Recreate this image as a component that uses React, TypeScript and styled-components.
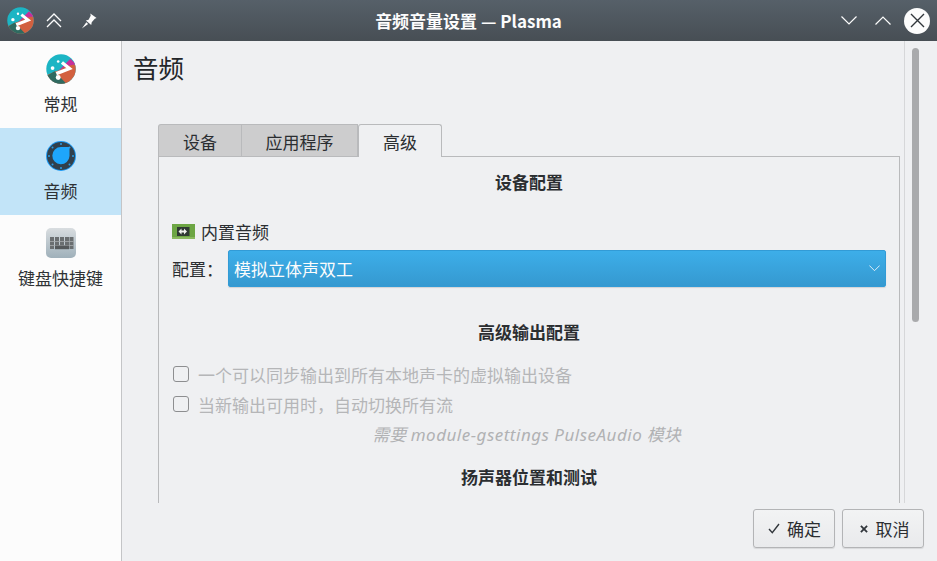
import React from "react";
import styled, { createGlobalStyle } from "styled-components";

const Global = createGlobalStyle`
  html, body { margin: 0; padding: 0; height: 100%; overflow: hidden; }
  body { font-family: "Noto Sans", "Noto Sans CJK SC", sans-serif; font-size: 17px; color: #2b2e31; background: #eff0f2; }
  * { box-sizing: border-box; }
`;

const Window = styled.div`
  width: 937px; height: 561px; display: flex; flex-direction: column; overflow: hidden;
`;
const TitleBar = styled.header`
  height: 41px; flex: none; display: grid; grid-template-columns: 1fr auto 1fr; align-items: center;
  background: linear-gradient(#566069, #474e54);
  color: #fcfcfc;
`;
const TitleLeft = styled.div`
  display: flex; align-items: center; padding-left: 7px; gap: 12px;
  svg:last-child { margin-left: 7px; }
`;
const TitleRight = styled.div`
  display: flex; align-items: center; justify-content: flex-end; padding-right: 7px; gap: 13px;
`;
const ChevronPair = styled.div`display: flex; align-items: center; gap: 18px;`;
const TitleText = styled.div`
  font-size: 17px; font-weight: 700; line-height: 20px; font-family: "Noto Sans CJK SC", "Noto Sans", sans-serif;
`;
const Body = styled.div`flex: 1; display: flex; min-height: 0;`;
const Sidebar = styled.nav`
  width: 122px; flex: none; background: #fcfcfc; border-right: 1px solid #c4c5c7;
  display: flex; flex-direction: column;
`;
const NavItem = styled.div<{ $active?: boolean }>`
  height: 87px; display: flex; flex-direction: column; align-items: center; padding-top: 13px;
  background: ${p => (p.$active ? "#c2e4f8" : "transparent")};
`;
const NavLabel = styled.span`
  margin-top: 9px; line-height: 24px; white-space: nowrap; font-size: 17px; color: #2f3235;
`;
const Main = styled.main`flex: 1; display: flex; flex-direction: column; min-width: 0;`;
const ScrollArea = styled.div`height: 462px; flex: none; display: flex; overflow: hidden;`;
const Content = styled.div`width: 782px; flex: none; padding: 9px 0 0 11px; overflow: hidden;`;
const Heading = styled.h1`
  margin: 0; font-size: 25.5px; font-weight: 400; line-height: 36px; color: #232629;
`;
const Tabs = styled.div`display: flex; margin: 38px 0 0 25px; height: 32px; position: relative; z-index: 1;`;
const Tab = styled.div<{ $active?: boolean; $w: number }>`
  width: ${p => p.$w}px; height: ${p => (p.$active ? "33px" : "32px")};
  display: flex; align-items: center; justify-content: center; padding-top: 1px;
  background: ${p => (p.$active ? "#eff0f2" : "#cdcdce")};
  border: 1px solid #b9babc;
  border-width: ${p => (p.$active ? "1px 1px 0 1px" : "1px 1px 0 0")};
  border-radius: ${p => (p.$active ? "3px 3px 0 0" : "0")};
  font-size: 17px;
  &:first-child { border-left-width: 1px; border-radius: 3px 0 0 0; }
`;
const Panel = styled.section`
  margin-left: 25px; width: 742px; height: 500px; border: 1px solid #b9babc; border-bottom: 0;
  padding: 13px 13px 0 13px;
`;
const SectionTitle = styled.div<{ $mt?: number }>`
  text-align: center; font-weight: 700; font-size: 17px; line-height: 24px; margin-top: ${p => p.$mt ?? 0}px; color: #2b2e31;
  font-family: "Noto Sans CJK SC", sans-serif;
`;
const DeviceRow = styled.div`display: flex; align-items: center; gap: 6px; margin-top: 25px; height: 24px; font-size: 17px;`;
const ProfileRow = styled.div`display: flex; align-items: center; margin-top: 7px; gap: 5px; font-size: 17px;`;
const Select = styled.div`
  flex: 1; height: 37px; display: flex; align-items: center; justify-content: space-between;
  padding: 0 5px 0 5px; border-radius: 2px; color: #fcfcfc; font-size: 17px;
  background: linear-gradient(#3daee9, #3599d0);
  border: 1px solid #329bd6; box-shadow: 0 1px 1px rgba(0,0,0,.12);
`;
const CheckRow = styled.label`
  display: flex; align-items: center; gap: 9px; height: 30px; color: #b5b6b8; font-size: 17px;
`;
const CheckList = styled.div`margin-top: 15px;`;
const Box = styled.span`
  width: 16px; height: 16px; border: 1px solid #8d8e90; border-radius: 3px; background: #eff0f2; flex: none; margin-left: 1px;
`;
const Hint = styled.div`
  text-align: center; font-style: italic; color: #b1b2b4; font-size: 17px; line-height: 30px; padding: 1px 5px 0 0;
`;
const HintLatin = styled.span`letter-spacing: .5px;`;
const ScrollColumn = styled.div`flex: 1; border-left: 1px solid #d6d7d9; padding: 7px 0 0 7px;`;
const Thumb = styled.div`width: 7px; height: 274px; background: #a9aaac; border-radius: 3.5px;`;
const Footer = styled.footer`flex: 1; display: flex; justify-content: flex-end; gap: 7px; padding: 6px 13px 0 0;`;
const Button = styled.button<{ $pad: number; $gap: number }>`
  width: 82px; height: 39px; display: flex; align-items: center; justify-content: center; gap: ${p => p.$gap}px;
  font: inherit; font-size: 17px; color: #2b2e31; padding: 0 0 0 ${p => p.$pad}px; border: 1px solid #b3b4b6; border-radius: 3px;
  background: linear-gradient(#f2f3f4, #e9eaec); box-shadow: 0 1px 1px rgba(0,0,0,.1);
`;
const CloseBall = styled.span`
  width: 26px; height: 26px; border-radius: 50%; background: #fcfcfc; display: flex; align-items: center; justify-content: center;
`;

const Logo = ({ size }: { size: number }) => (
  <svg width={size} height={size} viewBox="0 0 32 32">
    <defs><clipPath id={`lc${size}`}><circle cx="16" cy="16" r="15.7" /></clipPath></defs>
    <g clipPath={`url(#lc${size})`}>
      <rect width="32" height="32" fill="#1cb5c4" />
      <path d="M0 23L9 19L15 17L25 9L32 12V32H0Z" fill="#d2603f" />
      <path d="M0 24L9 18.5L22 32H0Z" fill="#2f6a60" />
      <path d="M13 18L26 5L32 11L21 13Z" fill="#c6309a" />
      <path d="M17 9L25 15.500L11 21" fill="none" stroke="#fff" strokeWidth="3.600" />
      <circle cx="7" cy="15" r="2" fill="#fff" />
      <circle cx="13" cy="8" r="1.4" fill="#fff" />
      <circle cx="13" cy="25" r="2.6" fill="#fff" />
    </g>
  </svg>
);

const AudioIcon = () => (
  <svg width="30" height="30" viewBox="0 0 30 30">
    <circle cx="15" cy="15" r="15" fill="#1d99f3" />
    <circle cx="15" cy="15" r="14" fill="#31404c" />
    <path d="M15 6h8.500v9a8.600 8.600 0 1 1-8.500-9z" fill="#1ea6fb" />
    {[[15,3],[23.500,6.500],[27,15],[23.500,23.500],[15,27],[6.500,23.500],[3,15],[6.500,6.500]].map(([x,y]) => (
      <circle key={`${x}-${y}`} cx={x} cy={y} r="1" fill="#2a9ee8" />
    ))}
  </svg>
);

const KeyboardIcon = () => (
  <svg width="30" height="30" viewBox="0 0 30 30">
    <defs><linearGradient id="kb" x1="0" y1="0" x2="0" y2="1"><stop offset="0" stopColor="#d9dde0" /><stop offset="1" stopColor="#9fb0ba" /></linearGradient></defs>
    <rect width="30" height="30" rx="5" fill="url(#kb)" />
    {[4,9,14,19,23.500].map(x => <rect key={x} x={x} y="9" width="4" height="12" fill="#6a6e70" />)}
    <rect x="4" y="13" width="23.500" height=".8" fill="#a8acae" />
    <rect x="4" y="17" width="23.500" height=".8" fill="#a8acae" />
    <rect x="9" y="17.600" width="14" height="3.600" fill="#55595b" />
  </svg>
);

const CardIcon = () => (
  <svg width="23" height="15" viewBox="0 0 23 15">
    <rect width="23" height="15" fill="#6da644" />
    <rect y="13" width="23" height="2" fill="#8ab95f" />
    <rect x="5" y="3" width="12.500" height="9" fill="#2f3a33" />
    <path d="M6.500 7.500l3-3v2h2.500v-2l3 3-3 3v-2H9.500v2z" fill="#f0f2ee" />
  </svg>
);

const Chevrons = () => (
  <svg width="16" height="15" viewBox="0 0 16 15" fill="none" stroke="#fcfcfc" strokeWidth="1.3">
    <path d="M1 8l7-7 7 7M1 14l7-7 7 7" />
  </svg>
);
const Pin = () => (
  <svg width="16" height="16" viewBox="0 0 18 18" fill="#fcfcfc">
    <path d="M10.500 0.500l7 5-2 1-3.400 4-.6 3-6-5 3-1 2.400-4.500zM6 10.500l2 1.800L1 17.500z" />
  </svg>
);
const Chevron = ({ up, w = 16 }: { up?: boolean; w?: number }) => (
  <svg width={w} height={w / 2 + 1} viewBox="0 0 16 9" fill="none" stroke="#fcfcfc" strokeWidth="1.2">
    <path d={up ? "M0.500 8.500L8 1l7.500 7.500" : "M0.500 0.500L8 8l7.500-7.500"} />
  </svg>
);
const CloseX = () => (
  <svg width="15" height="15" viewBox="0 0 15 15" stroke="#31363b" strokeWidth="1.4"><path d="M1 1l13 13M14 1L1 14" /></svg>
);
const Check = () => (
  <svg width="12" height="11" viewBox="0 0 12 11" fill="none" stroke="#31363b" strokeWidth="1.4"><path d="M1 6l3.300 3.600L11 1" /></svg>
);
const Cross = () => (
  <svg width="8" height="8" viewBox="0 0 9 9" stroke="#31363b" strokeWidth="2"><path d="M1 1l7 7M8 1L1 8" /></svg>
);

export default function App() {
  return (
    <Window>
      <Global />
      <TitleBar>
        <TitleLeft>
          <Logo size={27} />
          <Chevrons />
          <Pin />
        </TitleLeft>
        <TitleText>音频音量设置 — Plasma</TitleText>
        <TitleRight>
          <ChevronPair>
            <Chevron />
            <Chevron up />
          </ChevronPair>
          <CloseBall><CloseX /></CloseBall>
        </TitleRight>
      </TitleBar>
      <Body>
        <Sidebar>
          <NavItem><Logo size={30} /><NavLabel>常规</NavLabel></NavItem>
          <NavItem $active><AudioIcon /><NavLabel>音频</NavLabel></NavItem>
          <NavItem><KeyboardIcon /><NavLabel>键盘快捷键</NavLabel></NavItem>
        </Sidebar>
        <Main>
          <ScrollArea>
            <Content>
              <Heading>音频</Heading>
              <Tabs>
                <Tab $w={84}>设备</Tab>
                <Tab $w={116}>应用程序</Tab>
                <Tab $w={84} $active>高级</Tab>
              </Tabs>
              <Panel>
                <SectionTitle>设备配置</SectionTitle>
                <DeviceRow><CardIcon />内置音频</DeviceRow>
                <ProfileRow>
                  <span>配置：</span>
                  <Select>模拟立体声双工<Chevron w={11} /></Select>
                </ProfileRow>
                <SectionTitle $mt={33}>高级输出配置</SectionTitle>
                <CheckList>
                  <CheckRow><Box />一个可以同步输出到所有本地声卡的虚拟输出设备</CheckRow>
                  <CheckRow><Box />当新输出可用时，自动切换所有流</CheckRow>
                </CheckList>
                <Hint>需要 <HintLatin>module-gsettings PulseAudio</HintLatin> 模块</Hint>
                <SectionTitle $mt={15}>扬声器位置和测试</SectionTitle>
              </Panel>
            </Content>
            <ScrollColumn><Thumb /></ScrollColumn>
          </ScrollArea>
          <Footer>
            <Button $pad={1} $gap={7}><Check />确定</Button>
            <Button $pad={3} $gap={8}><Cross />取消</Button>
          </Footer>
        </Main>
      </Body>
    </Window>
  );
}
